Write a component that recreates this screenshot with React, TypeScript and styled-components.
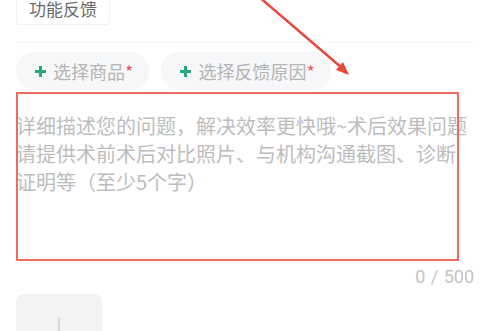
import React from "react";
import styled, { createGlobalStyle } from "styled-components";

const Global = createGlobalStyle`
  html, body { margin: 0; padding: 0; background: #ffffff; }
  body { font-family: "Noto Sans CJK SC", "Noto Sans", Roboto, sans-serif; overflow: hidden; }
  * { box-sizing: border-box; }
`;

const Page = styled.div`
  position: relative;
  width: 496px;
  height: 331px;
  overflow: hidden;
  padding: 0 22px 0 16px;
  display: flex;
  flex-direction: column;
  & > * { flex-shrink: 0; }
`;

const TypeTag = styled.div`
  align-self: flex-start;
  height: 25px;
  line-height: 17px;
  padding: 0 12px 8px;
  border: 1px solid #f2f2f2;
  border-top: none;
  border-radius: 0 0 4px 4px;
  font-size: 17px;
  color: #6a6a6a;
`;

const Divider = styled.div`
  margin-top: 17px;
  height: 1px;
  background: #f6f6f6;
`;

const ChipRow = styled.div`
  margin-top: 9px;
  display: flex;
  gap: 12px;
`;

const Chip = styled.div`
  height: 38px;
  border-radius: 19px;
  background: #f6f7f8;
  padding: 0 16px 0 19px;
  display: flex;
  align-items: center;
  gap: 7px;
  font-size: 18px;
  color: #b4b4b4;
  white-space: nowrap;
`;

const Required = styled.span`
  color: #ea5a64;
`;

const EditorWrap = styled.div`
  position: relative;
  margin-top: 2px;
  height: 170px;
`;

const Editor = styled.textarea`
  display: block;
  width: 100%;
  height: 100%;
  border: none;
  outline: none;
  resize: none;
  padding: 20px 0 0 0;
  margin: 0;
  background: transparent;
  font-family: "Noto Sans CJK SC", sans-serif;
  font-size: 20px;
  line-height: 28px;
  color: #333;
  &::placeholder { color: #bdbdbd; }
`;

const Highlight = styled.div`
  position: absolute;
  left: 0;
  top: 0;
  width: 443px;
  height: 169px;
  border: 2px solid #ee6b62;
  pointer-events: none;
`;

const Counter = styled.div`
  margin-top: 3px;
  height: 24px;
  line-height: 24px;
  text-align: right;
  font-family: Roboto, "Noto Sans", sans-serif;
  font-size: 18px;
  color: #c4c4c4;
  word-spacing: 1px;
`;

const Upload = styled.div`
  margin-top: 5px;
  width: 86px;
  height: 86px;
  border-radius: 8px;
  background: #f3f3f3;
  display: flex;
  align-items: center;
  justify-content: center;
`;

const ArrowLayer = styled.svg`
  position: absolute;
  left: 0;
  top: 0;
  pointer-events: none;
`;

const PlusIcon = ({ color, size, stroke }: { color: string; size: number; stroke: number }) => (
  <svg width={size} height={size} viewBox={`0 0 ${size} ${size}`}>
    <line x1={size / 2} y1={0} x2={size / 2} y2={size} stroke={color} strokeWidth={stroke} />
    <line x1={0} y1={size / 2} x2={size} y2={size / 2} stroke={color} strokeWidth={stroke} />
  </svg>
);

export default function App() {
  return (
    <>
      <Global />
      <Page>
        <TypeTag>功能反馈</TypeTag>
        <Divider />
        <ChipRow>
          <Chip>
            <PlusIcon color="#27a97e" size={11} stroke={3} />
            <span>
              选择商品<Required>*</Required>
            </span>
          </Chip>
          <Chip>
            <PlusIcon color="#27a97e" size={11} stroke={3} />
            <span>
              选择反馈原因<Required>*</Required>
            </span>
          </Chip>
        </ChipRow>
        <EditorWrap>
          <Editor placeholder="详细描述您的问题，解决效率更快哦~术后效果问题请提供术前术后对比照片、与机构沟通截图、诊断证明等（至少5个字）" />
          <Highlight />
        </EditorWrap>
        <Counter>0 / 500</Counter>
        <Upload>
          <PlusIcon color="#cfcfcf" size={40} stroke={1.5} />
        </Upload>
        <ArrowLayer width="496" height="331">
          <line x1="258" y1="-4" x2="342" y2="68" stroke="#e9483d" strokeWidth="2.5" strokeLinecap="round" />
          <polygon points="349,75 336,70 343,62" fill="#e9483d" />
        </ArrowLayer>
      </Page>
    </>
  );
}
